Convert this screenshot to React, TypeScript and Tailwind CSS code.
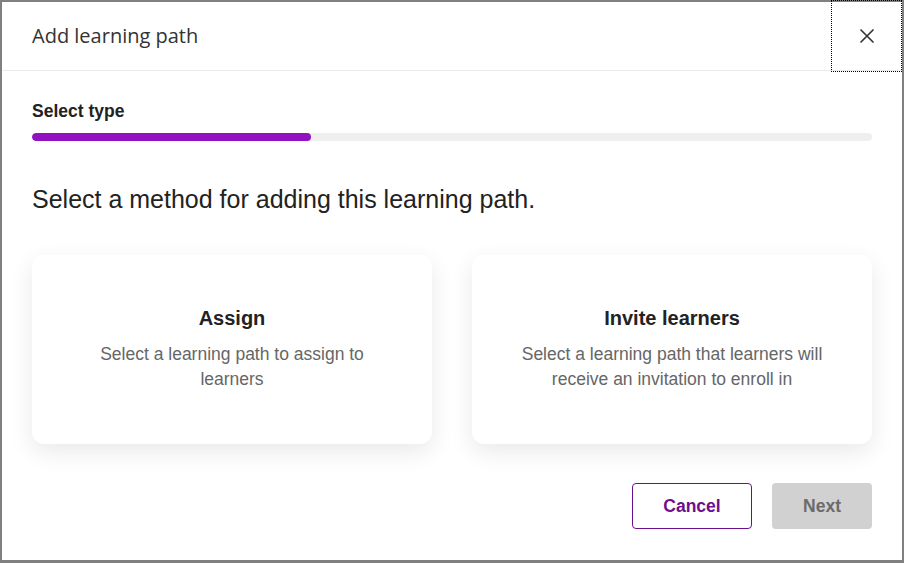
import React from "react";

export default function App() {
  return (
    <div className="w-[904px] h-[563px] bg-[#808080] pt-[2px] pl-[2px] overflow-hidden">
      <div className="w-[900px] h-[558px] bg-white flex flex-col">
        <div className="relative h-[69px] shrink-0 border-b border-[#ebebeb] flex items-center pl-[30px]">
          <h1 className="text-[20px] text-[#333] font-['Open_Sans',sans-serif] -mt-[1px]">Add learning path</h1>
          <button className="absolute right-0 top-[-2px] w-[71px] h-[72px] border border-dotted border-black flex items-center justify-center">
            <svg width="16" height="16" viewBox="0 0 16 16" fill="none" stroke="#333" strokeWidth="1.6">
              <path d="M1.5 1.5 L14.5 14.5 M14.5 1.5 L1.5 14.5" />
            </svg>
          </button>
        </div>
        <div className="flex flex-col px-[30px] pt-[30px] font-['Liberation_Sans',Arial,sans-serif]">
          <div className="text-[17.5px] leading-[20px] font-bold text-[#222]">Select type</div>
          <div className="mt-[12px] h-[8px] rounded-full bg-[#efefef] overflow-hidden">
            <div className="h-full w-[279px] rounded-full bg-[#9211c1]" />
          </div>
          <h2 className="mt-[44px] text-[25px] leading-[28px] text-[#222]">Select a method for adding this learning path.</h2>
          <div className="mt-[42px] grid grid-cols-2 gap-[40px]">
            <div className="h-[189px] rounded-[12px] bg-white shadow-[0_8px_24px_rgba(0,0,0,0.09)] flex flex-col items-center justify-center px-[30px] text-center">
              <div className="text-[20px] leading-[24px] font-bold text-[#222] -mt-[2px]">Assign</div>
              <div className="mt-[12px] text-[17.5px] leading-[25px] text-[#666] max-w-[300px]">Select a learning path to assign to learners</div>
            </div>
            <div className="h-[189px] rounded-[12px] bg-white shadow-[0_8px_24px_rgba(0,0,0,0.09)] flex flex-col items-center justify-center px-[30px] text-center">
              <div className="text-[20px] leading-[24px] font-bold text-[#222] -mt-[2px]">Invite learners</div>
              <div className="mt-[12px] text-[17.5px] leading-[25px] text-[#666] max-w-[320px]">Select a learning path that learners will receive an invitation to enroll in</div>
            </div>
          </div>
          <div className="mt-[39px] flex justify-end gap-[20px]">
            <button className="w-[120px] h-[46px] rounded-[4px] border border-[#6b0f8c] bg-white text-[17.5px] font-bold text-[#6b0f8c]">Cancel</button>
            <button className="w-[100px] h-[46px] rounded-[4px] bg-[#d1d1d1] text-[17.5px] font-bold text-[#6b6b6b]">Next</button>
          </div>
        </div>
      </div>
    </div>
  );
}
